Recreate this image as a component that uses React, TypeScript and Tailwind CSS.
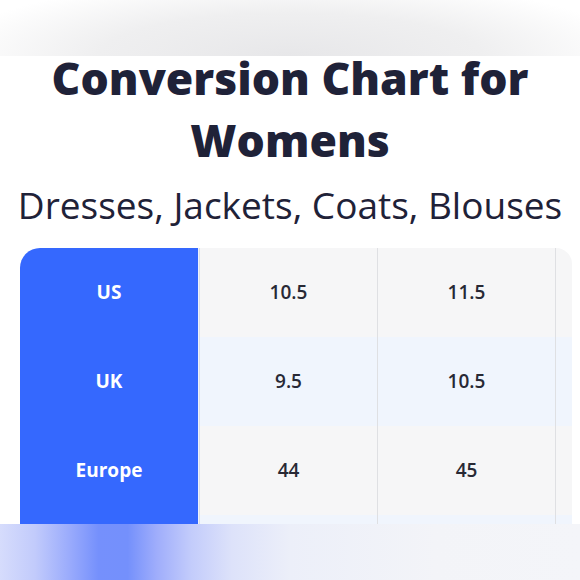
const rows = [
  { label: "US", values: ["10.5", "11.5", ""], bg: "bg-[#f6f6f7]" },
  { label: "UK", values: ["9.5", "10.5", ""], bg: "bg-[#f0f5fd]" },
  { label: "Europe", values: ["44", "45", ""], bg: "bg-[#f6f6f7]" },
  { label: "", values: ["", "", ""], bg: "bg-[#f0f5fd]" },
];

export default function App() {
  return (
    <div className="flex h-[580px] w-[580px] flex-col overflow-hidden bg-white font-['Open_Sans',sans-serif]">
      {/* top blurred strip */}
      <div className="h-[56px] w-full shrink-0 bg-[radial-gradient(ellipse_60%_140%_at_50%_100%,#e7e7e9_0%,#efeff0_55%,#ffffff_100%)]" />

      <h1 className="mt-[-9px] text-center text-[44.5px] leading-[62px] font-extrabold text-[#1f2238]">
        Conversion Chart for
        <br />
        Womens
      </h1>
      <p className="mt-[11px] text-center text-[37px] leading-[46px] text-[#1f2238]">
        Dresses, Jackets, Coats, Blouses
      </p>

      {/* table, cut off by the bottom strip */}
      <div className="mt-[20px] flex min-h-0 flex-1 pl-[20px]">
        <div className="flex w-[552px] overflow-hidden rounded-tl-[20px] rounded-tr-[16px]">
          <div className="flex w-[178px] shrink-0 flex-col bg-[#3568fe]">
            {rows.map((r, i) => (
              <div
                key={i}
                className="flex h-[89px] shrink-0 items-center justify-center text-[19px] font-bold text-white"
              >
                {r.label}
              </div>
            ))}
          </div>
          <div className="w-[1px] shrink-0 bg-[#eef1ff]" />
          {[0, 1, 2].map((c) => (
            <div key={c} className="flex w-[178px] shrink-0 flex-col border-l border-[#dfe0e3]">
              {rows.map((r, i) => (
                <div
                  key={i}
                  className={`flex h-[89px] shrink-0 items-center justify-center text-[19px] font-semibold text-[#282935] ${r.bg}`}
                >
                  {r.values[c]}
                </div>
              ))}
            </div>
          ))}
        </div>
      </div>

      {/* bottom blurred strip */}
      <div className="h-[56px] w-full shrink-0 bg-[linear-gradient(90deg,#d6dcfc_0%,#c2cbfb_6%,#9aabfc_12%,#7590fc_17%,#7490fc_22%,#9fadfb_27%,#c3ccfb_33%,#dde2fa_40%,#eceff9_50%,#f3f4f8_75%,#f4f5f9_100%)]" />
    </div>
  );
}
